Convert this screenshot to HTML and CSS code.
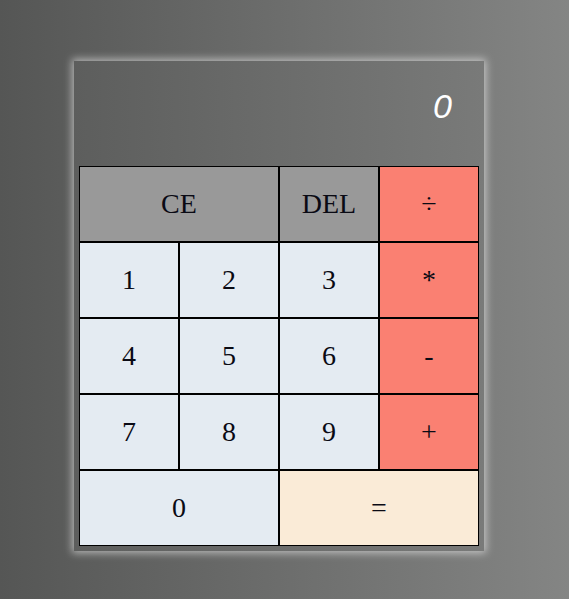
FILE: index.html
```html
<!DOCTYPE html>
<html>
<head>
<meta charset="utf-8">
<link rel="stylesheet" href="styles.css">
</head>
<body>
<div class="calculator">
  <div class="display">0</div>
  <div class="keys">
    <button class="key fn span2">CE</button>
    <button class="key fn">DEL</button>
    <button class="key op">÷</button>
    <button class="key num">1</button>
    <button class="key num">2</button>
    <button class="key num">3</button>
    <button class="key op">*</button>
    <button class="key num">4</button>
    <button class="key num">5</button>
    <button class="key num">6</button>
    <button class="key op">-</button>
    <button class="key num">7</button>
    <button class="key num">8</button>
    <button class="key num">9</button>
    <button class="key op">+</button>
    <button class="key num span2">0</button>
    <button class="key eq span2">=</button>
  </div>
</div>
</body>
</html>
```
FILE: styles.css
```css
html, body {
  margin: 0;
  height: 100%;
}
body {
  background: linear-gradient(to right, #555655, #848584);
  overflow: hidden;
}
.calculator {
  width: 400px;
  margin: 61px 0 0 74px;
  padding: 0 5px 5px 5px;
  background: linear-gradient(to right, #5d5e5d, #797a79);
  box-shadow: 0 0 8px 2px rgba(255, 255, 255, 0.55);
}
.display {
  height: 105px;
  box-sizing: border-box;
  padding: 26px 27px 0 0;
  text-align: right;
  color: #fff;
  font-family: "Liberation Sans", sans-serif;
  font-style: italic;
  font-size: 34px;
  line-height: 38px;
}
.keys {
  display: grid;
  grid-template-columns: repeat(4, 100px);
  grid-auto-rows: 76px;
}
.key {
  margin: 0;
  padding: 0;
  border: 1px solid #000;
  border-radius: 0;
  font-family: "Liberation Serif", serif;
  font-size: 28px;
  color: #0a0a14;
}
.span2 {
  grid-column: span 2;
}
.fn {
  background: #999999;
}
.op {
  background: #fa8072;
}
.num {
  background: #e4ebf2;
}
.eq {
  background: #faebd7;
}
```
